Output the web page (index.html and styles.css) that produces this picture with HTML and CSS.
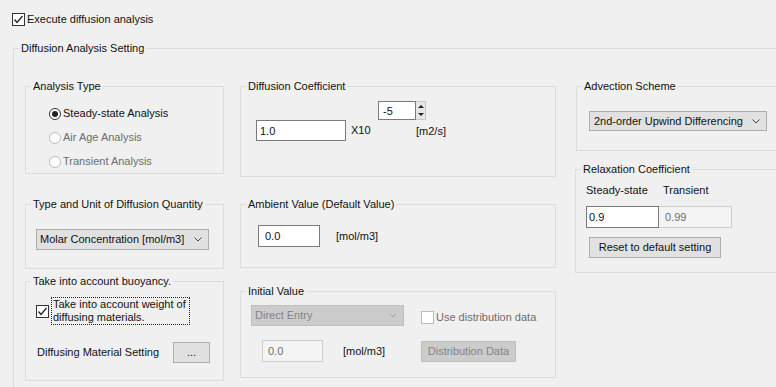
FILE: index.html
```html
<!DOCTYPE html>
<html>
<head>
<meta charset="utf-8">
<title>Diffusion Analysis Setting</title>
<link rel="stylesheet" href="styles.css">
</head>
<body>
<div class="page">
  <div class="check-line">
    <span class="check"><svg viewBox="0 0 11 11" width="11" height="11"><polyline points="1.5,5.5 4,8.5 9.5,2" class="tick"/></svg></span>
    <span>Execute diffusion analysis</span>
  </div>

  <div class="group outer">
    <div class="title">Diffusion Analysis Setting</div>
    <div class="columns">
      <div class="col col1">
        <div class="group g-analysis">
          <div class="title">Analysis Type</div>
          <div class="radios">
            <div class="radio-row"><span class="radio on"></span><span>Steady-state Analysis</span></div>
            <div class="radio-row off"><span class="radio"></span><span>Air Age Analysis</span></div>
            <div class="radio-row off"><span class="radio"></span><span>Transient Analysis</span></div>
          </div>
        </div>

        <div class="group g-unit">
          <div class="title">Type and Unit of Diffusion Quantity</div>
          <div class="combo unit-combo"><span>Molar Concentration [mol/m3]</span><svg class="chev" viewBox="0 0 8 5" width="8" height="5"><polyline points="0.5,0.5 4,4 7.5,0.5"/></svg></div>
        </div>

        <div class="group g-buoy">
          <div class="title">Take into account buoyancy.</div>
          <div class="buoy-row">
            <span class="check"><svg viewBox="0 0 11 11" width="11" height="11"><polyline points="1.5,5.5 4,8.5 9.5,2" class="tick"/></svg></span>
            <span class="focus-label">Take into account weight of<br>diffusing materials.</span>
          </div>
          <div class="material-row">
            <span>Diffusing Material Setting</span>
            <button class="btn dots-btn">...</button>
          </div>
        </div>
      </div>

      <div class="col col2">
        <div class="group g-coef">
          <div class="title">Diffusion Coefficient</div>
          <div class="coef-row">
            <input class="field coef-input" value="1.0">
            <span class="x10">X10</span>
            <div class="exp-col">
              <div class="spin">
                <input class="field spin-input" value="-5">
                <div class="spin-btns">
                  <span class="spin-half"><span class="tri-up"></span></span>
                  <span class="spin-half"><span class="tri-down"></span></span>
                </div>
              </div>
              <span class="unit-m2">[m2/s]</span>
            </div>
          </div>
        </div>

        <div class="group g-ambient">
          <div class="title">Ambient Value (Default Value)</div>
          <div class="ambient-row">
            <input class="field ambient-input" value="0.0">
            <span class="amb-unit">[mol/m3]</span>
          </div>
        </div>

        <div class="group g-initial">
          <div class="title">Initial Value</div>
          <div class="initial-grid">
            <div class="combo disabled entry-combo"><span>Direct Entry</span><svg class="chev" viewBox="0 0 8 5" width="8" height="5"><polyline points="0.5,0.5 4,4 7.5,0.5"/></svg></div>
            <div class="dist-check"><span class="check dis"></span><span>Use distribution data</span></div>
            <div class="init-val"><input class="field init-input" value="0.0" disabled><span class="init-unit">[mol/m3]</span></div>
            <div><button class="btn dist-btn" disabled>Distribution Data</button></div>
          </div>
        </div>
      </div>

      <div class="col col3">
        <div class="group g-adv">
          <div class="title">Advection Scheme</div>
          <div class="combo adv-combo"><span>2nd-order Upwind Differencing</span><svg class="chev" viewBox="0 0 8 5" width="8" height="5"><polyline points="0.5,0.5 4,4 7.5,0.5"/></svg></div>
        </div>

        <div class="group g-relax">
          <div class="title">Relaxation Coefficient</div>
          <div class="relax-labels"><span class="lbl-steady">Steady-state</span><span>Transient</span></div>
          <div class="relax-inputs">
            <input class="field relax-input" value="0.9">
            <input class="field relax-input dis-field" value="0.99" disabled>
          </div>
          <button class="btn reset-btn">Reset to default setting</button>
        </div>
      </div>
    </div>
  </div>
</div>
</body>
</html>
```

FILE: styles.css
```css
* { box-sizing: border-box; }

html, body { margin: 0; padding: 0; }

body {
  width: 776px;
  height: 387px;
  overflow: hidden;
  background: #f0f0f0;
  font: 11px/13px "Liberation Sans", Arial, sans-serif;
  color: #111;
}

.page { padding: 13px 0 0 12px; }

.check-line {
  display: flex;
  align-items: center;
  gap: 2px;
  height: 13px;
}

.check {
  flex: none;
  width: 13px;
  height: 13px;
  border: 1px solid #333;
  background: #fff;
  display: flex;
  align-items: center;
  justify-content: center;
}
.check.dis { border-color: #bcbcbc; }
.tick { fill: none; stroke: #222; stroke-width: 1.3; }

.group { border: 1px solid #dcdcdc; }

.title {
  margin: -7px 0 0 5px;
  padding: 0 2px;
  height: 13px;
  width: max-content;
  background: #f0f0f0;
  white-space: nowrap;
}

.outer { margin: 22px 0 0 1px; width: 800px; height: 352px; }

.columns { display: flex; margin-top: 31px; padding-left: 11px; }

.col { display: flex; flex-direction: column; flex: none; }
.col1 { width: 199px; }
.col2 { width: 316px; margin-left: 16px; }
.col3 { width: 230px; margin-left: 20px; }

/* column 1 */
.g-analysis { height: 88px; }
.g-unit { height: 65px; margin-top: 30px; }
.g-buoy { height: 100px; margin-top: 12px; }

.radios {
  display: flex;
  flex-direction: column;
  gap: 11px;
  padding: 14px 0 0 23px;
}
.radio-row { display: flex; align-items: center; gap: 2px; height: 13px; }
.radio-row.off { color: #6d6d6d; }
.radio {
  flex: none;
  width: 12px;
  height: 12px;
  border: 1px solid #333;
  border-radius: 50%;
  background: #fff;
  display: flex;
  align-items: center;
  justify-content: center;
}
.radio.on::after {
  content: "";
  width: 6px;
  height: 6px;
  border-radius: 50%;
  background: #222;
}
.radio-row.off .radio { border-color: #bcbcbc; }

.combo {
  display: flex;
  align-items: center;
  justify-content: space-between;
  height: 21px;
  padding: 0 6px 0 3px;
  background: #e1e1e1;
  border: 1px solid #adadad;
  white-space: nowrap;
}
.chev { fill: none; stroke: #444; stroke-width: 1; }
.combo.disabled { background: #cccccc; border-color: #bfbfbf; color: #838383; }
.combo.disabled .chev { stroke: #a0a0a0; }

.unit-combo { width: 173px; margin: 18px 0 0 10px; }

.buoy-row {
  display: flex;
  align-items: center;
  gap: 2px;
  margin-top: 9px;
  padding-left: 10px;
}
.focus-label {
  width: 139px;
  height: 28px;
  border: 1px dotted #222;
  padding: 0 0 0 1px;
}

.material-row {
  display: flex;
  align-items: center;
  justify-content: space-between;
  margin-top: 17px;
  padding: 0 13px 0 11px;
}

.btn {
  font: inherit;
  color: #111;
  height: 21px;
  padding: 0;
  background: #e1e1e1;
  border: 1px solid #adadad;
  border-radius: 0;
}
.btn:disabled { background: #cccccc; border-color: #bfbfbf; color: #838383; }
.dots-btn { width: 37px; }

/* column 2 */
.g-coef { height: 91px; }
.g-ambient { height: 64px; margin-top: 27px; }
.g-initial { height: 87px; margin-top: 23px; }

.field {
  font: inherit;
  color: #111;
  height: 21px;
  padding: 0 3px;
  background: #fff;
  border: 1px solid #7a7a7a;
  border-radius: 0;
  outline: none;
}
.field:disabled { background: #f4f4f4; border-color: #cccccc; color: #6d6d6d; }

.coef-row { display: flex; align-items: flex-start; margin-top: 8px; padding-left: 15px; }
.coef-input { width: 90px; margin-top: 19px; }
.x10 { width: 27px; margin: 23px 0 0 5px; }
.exp-col { display: flex; flex-direction: column; }
.spin { display: flex; height: 19px; }
.spin-input { width: 38px; height: 19px; padding-left: 4px; }
.spin-btns {
  display: flex;
  flex-direction: column;
  width: 10px;
  height: 19px;
  background: #e6e6e6;
  border: 1px solid #c8c8c8;
  border-left: none;
}
.spin-half { flex: 1; display: flex; align-items: center; justify-content: center; }
.tri-up { width: 0; height: 0; border: 3px solid transparent; border-bottom: 3px solid #222; border-top: 0; }
.tri-down { width: 0; height: 0; border: 3px solid transparent; border-top: 3px solid #222; border-bottom: 0; }
.unit-m2 { margin: 5px 0 0 38px; }

.ambient-row { display: flex; align-items: center; margin-top: 14px; padding-left: 17px; }
.ambient-input { width: 62px; height: 22px; padding-left: 6px; }
.amb-unit { margin-left: 16px; }

.initial-grid {
  display: grid;
  grid-template-columns: 170px auto;
  row-gap: 14px;
  align-items: center;
  margin-top: 7px;
  padding-left: 10px;
}
.entry-combo { width: 153px; }
.dist-check { display: flex; align-items: center; gap: 2px; margin-top: 3px; color: #6d6d6d; }
.init-val { display: flex; align-items: center; }
.init-input { width: 61px; height: 22px; margin-left: 11px; padding-left: 5px; }
.init-unit { margin-left: 20px; }
.dist-btn { width: 95px; }

/* column 3 */
.g-adv { height: 65px; }
.g-relax { height: 104px; margin: 18px 0 0 -1px; }

.adv-combo { width: 178px; height: 20px; margin: 18px 0 0 12px; padding-left: 4px; }

.relax-labels { display: flex; margin-top: 8px; padding-left: 10px; }
.lbl-steady { width: 77px; }
.relax-inputs { display: flex; margin-top: 9px; padding-left: 10px; }
.relax-input { width: 73px; height: 22px; padding-left: 2px; }
.relax-input.dis-field { padding-left: 6px; border-left: none; }
.reset-btn { width: 132px; margin: 9px 0 0 13px; }
```
